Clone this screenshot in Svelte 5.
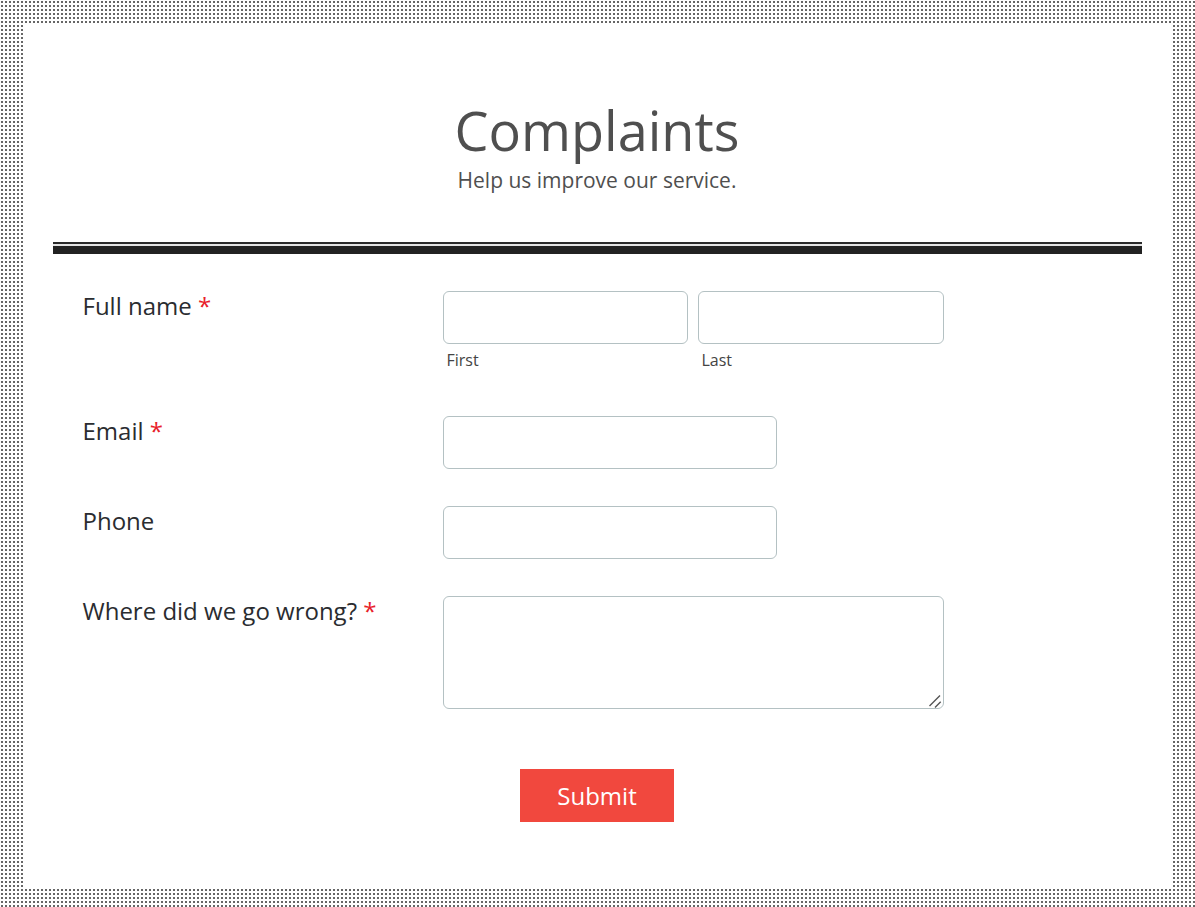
<script lang="ts">
  // Complaints form: single card on a dotted page background.
  let first = $state("");
  let last = $state("");
  let email = $state("");
  let phone = $state("");
  let wrong = $state("");
</script>

<div class="page">
  <form class="card" onsubmit={(e) => e.preventDefault()}>
    <header>
      <h1>Complaints</h1>
      <p>Help us improve our service.</p>
    </header>

    <div class="divider"></div>

    <div class="row name-row">
      <span class="label">Full name <em>*</em></span>
      <div class="name-fields">
        <div class="sub">
          <input type="text" bind:value={first} aria-label="First" />
          <small>First</small>
        </div>
        <div class="sub">
          <input type="text" bind:value={last} aria-label="Last" />
          <small>Last</small>
        </div>
      </div>
    </div>

    <div class="row">
      <span class="label">Email <em>*</em></span>
      <input class="medium" type="email" bind:value={email} aria-label="Email" />
    </div>

    <div class="row">
      <span class="label">Phone</span>
      <input class="medium" type="tel" bind:value={phone} aria-label="Phone" />
    </div>

    <div class="row">
      <span class="label">Where did we go wrong? <em>*</em></span>
      <div class="area">
        <textarea bind:value={wrong} aria-label="Where did we go wrong?"></textarea>
        <svg class="grip" width="14" height="14" viewBox="0 0 14 14" aria-hidden="true">
          <path d="M1.5 11 12 .5M7 12.5l5.7-5.7" />
        </svg>
      </div>
    </div>

    <div class="actions">
      <button type="submit">Submit</button>
    </div>
  </form>
</div>

<style>
  :global(body) {
    margin: 0;
  }
  .page {
    box-sizing: border-box;
    height: 907px;
    padding: 24px 24px 18px 23px;
    background-color: #fff;
    background-image: radial-gradient(circle at 2px 2px, #444 0, #444 0.6px, transparent 1.2px);
    background-size: 4px 4px;
    font-family: "Open Sans", sans-serif;
    color: #2a2c30;
  }
  .card {
    box-sizing: border-box;
    height: 865px;
    padding: 0 29px 0 30px;
    background: #fff;
  }
  header {
    padding-top: 74px;
    padding-right: 1px;
    text-align: center;
    color: #4f4f4f;
  }
  h1 {
    margin: 0;
    font-size: 54px;
    font-weight: 400;
    line-height: 64px;
  }
  header p {
    margin: 0;
    padding-top: 4px;
    font-size: 21px;
    line-height: 28px;
  }
  .divider {
    box-sizing: border-box;
    height: 12px;
    margin-top: 48px;
    margin-bottom: 37px;
    border-top: 2px solid #2a2a2a;
    border-bottom: 8px solid #222;
    background: #e4e4e4;
  }
  .row {
    display: flex;
    align-items: flex-start;
    padding-left: 30px;
    margin-bottom: 37px;
  }
  .name-row {
    margin-bottom: 45px;
  }
  .label {
    width: 360px;
    flex: none;
    font-size: 24px;
    line-height: 29px;
    transform: translateX(-0.5px);
  }
  .label em {
    font-style: normal;
    color: #e8202a;
  }
  .name-fields {
    display: flex;
    gap: 10px;
  }
  .sub {
    display: flex;
    flex-direction: column;
  }
  .sub small {
    margin-top: 5px;
    padding-left: 3.5px;
    font-size: 16px;
    line-height: 22px;
    color: #444;
  }
  input,
  textarea {
    box-sizing: border-box;
    display: block;
    border: 1px solid #b4c1c3;
    border-radius: 6px;
    background: #fff;
    margin: 0;
    padding: 6px 8px;
    font: inherit;
  }
  .sub input {
    width: 245px;
    height: 53px;
  }
  .sub:last-child input {
    width: 246px;
  }
  .medium {
    width: 334px;
    height: 53px;
  }
  .area {
    position: relative;
  }
  textarea {
    width: 501px;
    height: 113px;
    resize: none;
  }
  .grip {
    position: absolute;
    right: 2px;
    bottom: 0;
    pointer-events: none;
  }
  .grip path {
    fill: none;
    stroke: #555;
    stroke-width: 1.4;
  }
  .actions {
    display: flex;
    justify-content: center;
    margin-top: 60px;
    padding-right: 1px;
  }
  button {
    width: 154px;
    height: 53px;
    border: 0;
    background: #f1483e;
    color: #fff;
    font: inherit;
    font-size: 24px;
    cursor: pointer;
  }
</style>
